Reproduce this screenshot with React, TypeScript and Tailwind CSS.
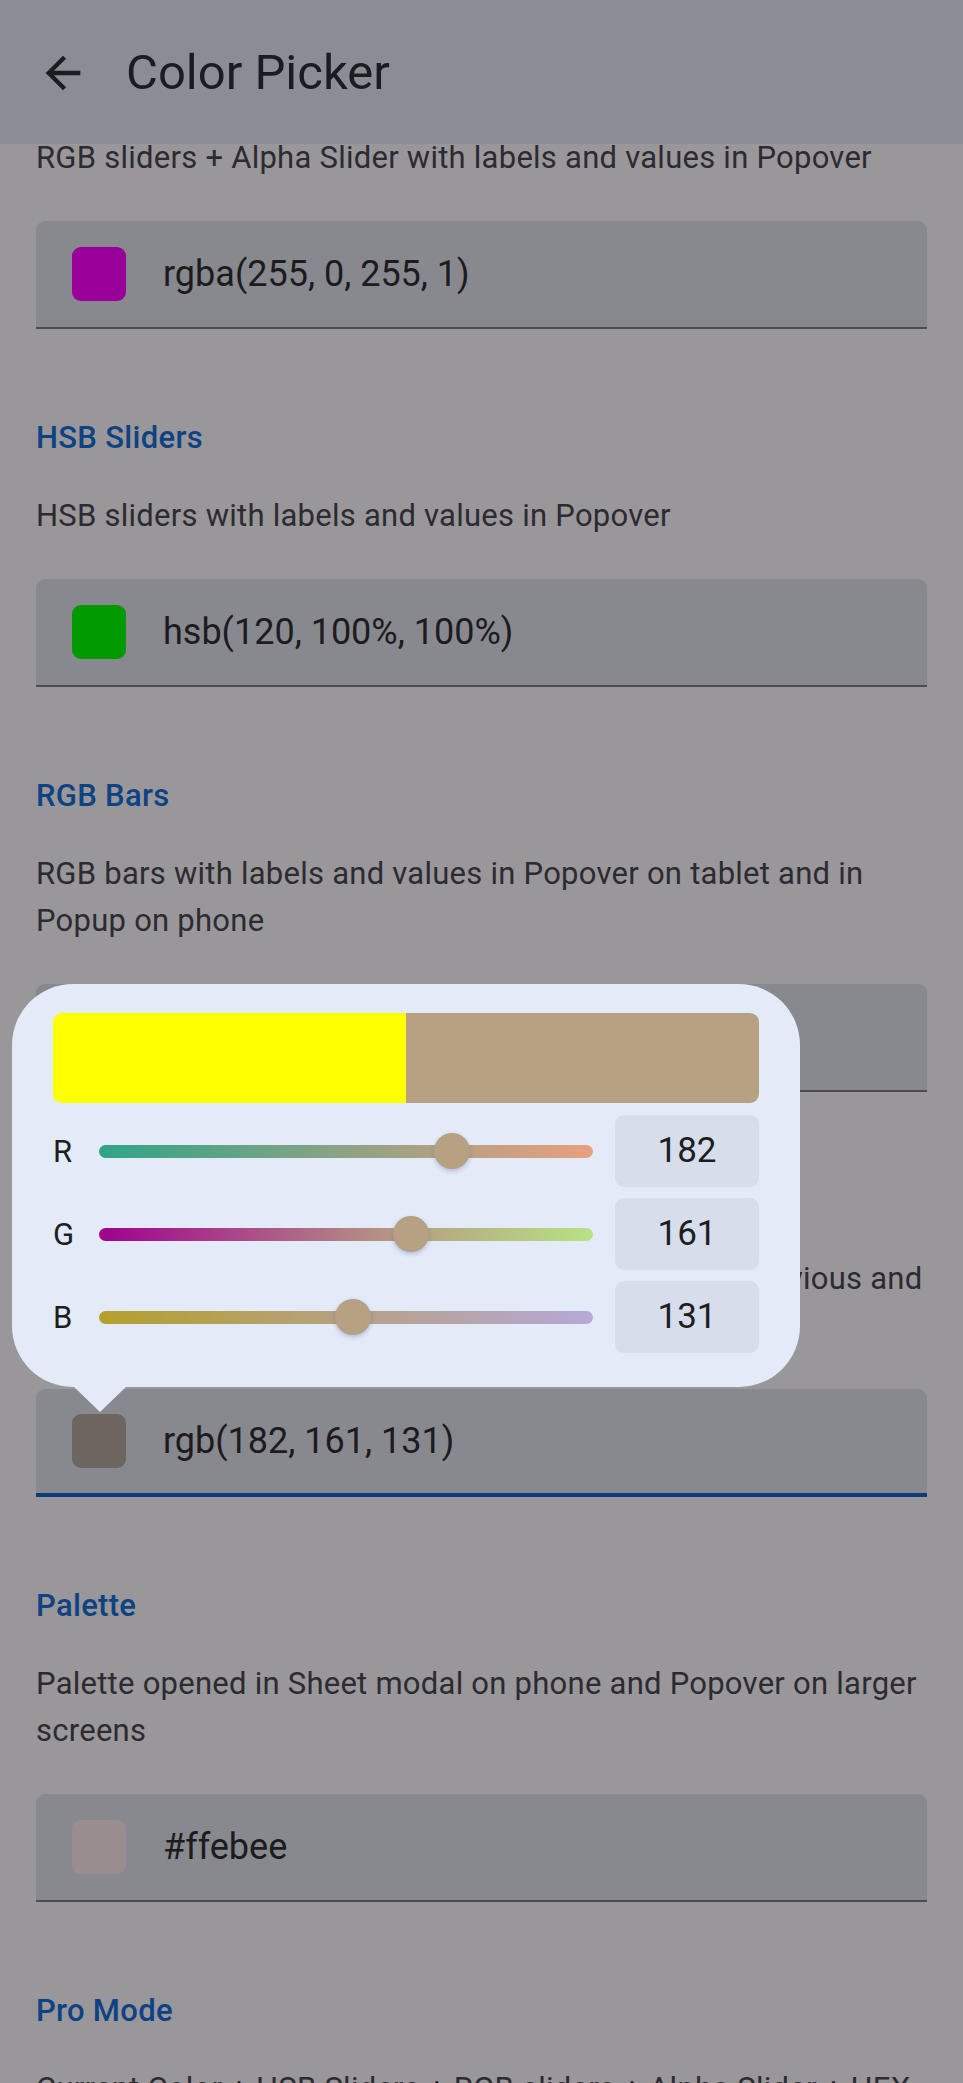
import React from 'react';

type Section = {
  title?: string;
  text: string;
  value: string;
  swatch: string;
  focused?: boolean;
};

const sections: Section[] = [
  {
    text: 'RGB sliders + Alpha Slider with labels and values in Popover',
    value: 'rgba(255, 0, 255, 1)',
    swatch: 'bg-[#990099]',
  },
  {
    title: 'HSB Sliders',
    text: 'HSB sliders with labels and values in Popover',
    value: 'hsb(120, 100%, 100%)',
    swatch: 'bg-[#009900]',
  },
  {
    title: 'RGB Bars',
    text: 'RGB bars with labels and values in Popover on tablet and in Popup on phone',
    value: 'rgb(0, 0, 255)',
    swatch: 'bg-[#000099]',
  },
  {
    title: 'RGB Sliders + Colors',
    text: 'RGB sliders with labels and values in Popover, and previous and current color value blocks',
    value: 'rgb(182, 161, 131)',
    swatch: 'bg-[#6d6660]',
    focused: true,
  },
  {
    title: 'Palette',
    text: 'Palette opened in Sheet modal on phone and Popover on larger screens',
    value: '#ffebee',
    swatch: 'bg-[#998d8f]',
  },
  {
    title: 'Pro Mode',
    text: 'Current Color + HSB Sliders + RGB sliders + Alpha Slider + HEX + Palette with labels and editable values',
    value: 'rgba(0, 255, 255, 1)',
    swatch: 'bg-[#009999]',
  },
];

const channels = [
  { label: 'R', value: 182, track: 'bg-[linear-gradient(to_right,#2ea586,#b6a183_71%,#e8a080)]' },
  { label: 'G', value: 161, track: 'bg-[linear-gradient(to_right,#a0008e,#b6a183_63%,#b8e284)]' },
  { label: 'B', value: 131, track: 'bg-[linear-gradient(to_right,#b5a02c,#b6a183_51%,#b6a8da)]' },
];

function BackArrow() {
  return (
    <svg width="52" height="52" viewBox="0 0 24 24" className="fill-[#1b1b20]">
      <path d="M20 11H7.83l5.59-5.59L12 4l-8 8 8 8 1.41-1.41L7.83 13H20v-2z" />
    </svg>
  );
}

function ColorField({ s }: { s: Section }) {
  return (
    <div
      className={`mt-[40px] flex h-[108px] items-center gap-[37px] rounded-t-[9px] bg-[#88898e] pl-[36px] ${
        s.focused ? 'border-b-4 border-[#0d3b79]' : 'border-b-2 border-[#4c4b52]'
      }`}
    >
      <div className={`h-[54px] w-[54px] shrink-0 rounded-[9px] ${s.swatch}`} />
      <span className="text-[36px] leading-none text-[#1c1b20]">{s.value}</span>
    </div>
  );
}

function RgbPopover() {
  return (
    <div className="absolute left-[12px] top-[984px] z-20 h-[403px] w-[788px] rounded-[61px] bg-[#e3eaf8] px-[41px] pt-[29px]">
      {/* previous / current color */}
      <div className="flex h-[90px] overflow-hidden rounded-[9px]">
        <div className="flex-1 bg-[#ffff00]" />
        <div className="flex-1 bg-[#b6a183]" />
      </div>

      <div className="mt-[12px] flex flex-col gap-[11px]">
        {channels.map((c) => (
          <div key={c.label} className="flex h-[72px] items-center">
            <span className="w-[46px] text-[31px] leading-none text-[#1d1d22]">{c.label}</span>
            <div className={`relative h-[13px] flex-1 rounded-full ${c.track}`}>
              <div
                className="absolute top-1/2 h-[36px] w-[36px] -translate-x-1/2 -translate-y-1/2 rounded-full bg-[#b6a183] shadow-[0_2px_4px_rgba(70,80,150,0.3)]"
                style={{ left: `${(c.value / 255) * 100}%` }}
              />
            </div>
            <div className="ml-[22px] flex h-[72px] w-[144px] items-center justify-center rounded-[9px] bg-[#d6ddeb] text-[35px] text-[#1d1d22]">
              {c.value}
            </div>
          </div>
        ))}
      </div>

      {/* arrow pointing at the field */}
      <svg className="absolute left-[61px] top-[402px]" width="54" height="26" viewBox="0 0 54 26">
        <polygon points="0,0 54,0 27,26" fill="#e3eaf8" />
      </svg>
    </div>
  );
}

export default function App() {
  return (
    <div className="relative h-[2083px] overflow-hidden bg-[#99979a] font-['Roboto',sans-serif]">
      {/* Navbar */}
      <header className="absolute inset-x-0 top-0 z-10 flex h-[144px] items-center bg-[#8a8d96] pl-[37px] pt-[2px]">
        <BackArrow />
        <h1 className="ml-[37px] text-[49px] font-normal text-[#1b1b20]">Color Picker</h1>
      </header>

      <main className="px-[36px] pt-[134px]">
        {sections.map((s, i) => (
          <section key={s.value} className={i ? 'mt-[89px]' : ''}>
            {s.title && (
              <h2 className="mb-[34px] text-[31px] font-medium leading-[40px] tracking-[0.3px] text-[#0f4282]">
                {s.title}
              </h2>
            )}
            <p className="text-[31px] leading-[47px] tracking-[0.25px] text-[#2c2b31]">{s.text}</p>
            <ColorField s={s} />
          </section>
        ))}
      </main>

      <RgbPopover />
    </div>
  );
}
